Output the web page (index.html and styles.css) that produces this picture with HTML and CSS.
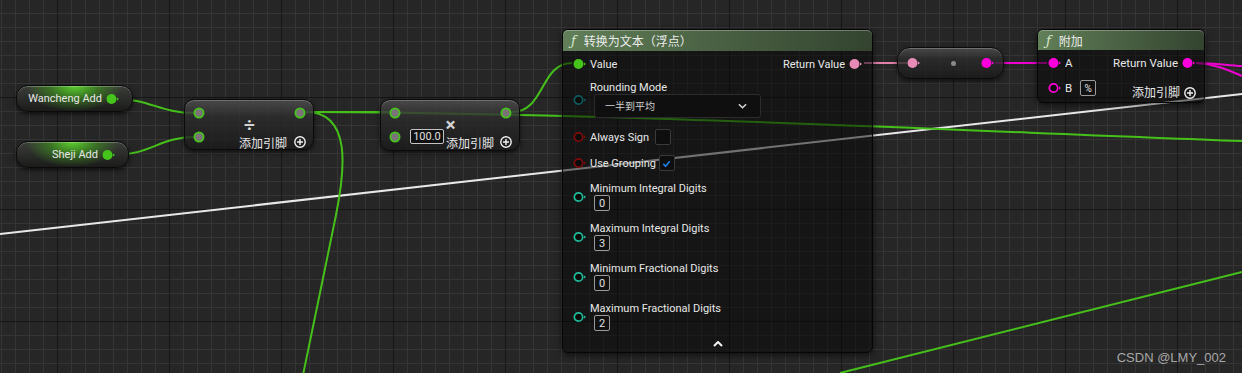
FILE: index.html
```html
<!DOCTYPE html>
<html lang="zh-CN">
<head>
  <meta charset="UTF-8">
  <meta name="viewport" content="width=device-width, initial-scale=1.0">
  <title>蓝图 - 百分比文本</title>
  <link rel="stylesheet" href="styles.css">
</head>
<body>
  <div class="graph">
    <svg class="wires" width="1242" height="373" viewBox="0 0 1242 373">
      <path class="w-white" d="M0 234 L1242 94"/>
      <path class="w-green" d="M117 99 C150 99 160 113 194 113"/>
      <path class="w-green" d="M114 155 C150 155 160 137 194 137"/>
      <path class="w-green" d="M306 112 L390 112"/>
      <path class="w-green" d="M306 112 C600 113 900 128 1242 141"/>
      <path class="w-green" d="M306 112 C352 112 345 170 336 215 S310 340 303 375"/>
      <path class="w-green" d="M512 112 C545 112 540 63 572 63"/>
      <path class="w-green" d="M840 373 L1242 272"/>
      <path class="w-pink" d="M864 63 L907 63"/>
      <path class="w-magenta" d="M995 63 L1047 63"/>
      <path class="w-magenta" d="M1196 63 C1215 63 1225 65 1242 66"/>
      <path class="w-magenta" d="M1196 63 C1215 64 1228 70 1242 76"/>
    </svg>

    <div class="node var var-wancheng">
      <span class="var-name">Wancheng Add</span>
      <svg class="pin c-green" viewBox="0 0 14 12"><circle cx="5.5" cy="6" r="5"/><path d="M11 4.5 13 6 11 7.5z"/></svg>
    </div>

    <div class="node var var-sheji">
      <span class="var-name">Sheji Add</span>
      <svg class="pin c-green" viewBox="0 0 14 12"><circle cx="5.5" cy="6" r="5"/><path d="M11 4.5 13 6 11 7.5z"/></svg>
    </div>

    <div class="node pure pure-divide">
      <svg class="wpin in-a" viewBox="0 0 12 12"><circle cx="6" cy="6" r="4.6"/></svg>
      <svg class="wpin in-b" viewBox="0 0 12 12"><circle cx="6" cy="6" r="4.6"/></svg>
      <span class="op">÷</span>
      <svg class="wpin out" viewBox="0 0 12 12"><circle cx="6" cy="6" r="4.6"/></svg>
      <div class="add-pin">
        <span>添加引脚</span>
        <svg class="plus" viewBox="0 0 12 12"><circle cx="6" cy="6" r="5.2"/><path d="M6 3v6M3 6h6"/></svg>
      </div>
    </div>

    <div class="node pure pure-multiply">
      <svg class="wpin in-a" viewBox="0 0 12 12"><circle cx="6" cy="6" r="4.6"/></svg>
      <svg class="wpin in-b" viewBox="0 0 12 12"><circle cx="6" cy="6" r="4.6"/></svg>
      <span class="op">×</span>
      <svg class="wpin out" viewBox="0 0 12 12"><circle cx="6" cy="6" r="4.6"/></svg>
      <div class="add-pin wide">
        <span class="num-box wide-box">100.0</span>
        <span class="add-label">添加引脚</span>
        <svg class="plus" viewBox="0 0 12 12"><circle cx="6" cy="6" r="5.2"/><path d="M6 3v6M3 6h6"/></svg>
      </div>
    </div>

    <div class="node fn fn-convert">
      <div class="fn-head"><span class="fx">ƒ</span>转换为文本（浮点）</div>
      <div class="fn-body">
        <div class="fn-inputs">
          <div class="pin-row">
            <svg class="pin c-green" viewBox="0 0 14 12"><circle cx="5.5" cy="6" r="5"/><path d="M11 4.5 13 6 11 7.5z"/></svg>
            <span>Value</span>
          </div>
          <div class="pin-row mt8">
            <svg class="pin hollow c-enum" viewBox="0 0 14 12"><circle cx="5.5" cy="6" r="4.2"/><path d="M11 4.5 13 6 11 7.5z"/></svg>
            <div class="stack">
              <span>Rounding Mode</span>
              <div class="dropdown">
                <span>一半到平均</span>
                <svg class="chev" viewBox="0 0 10 6"><path d="M1 1 5 5 9 1"/></svg>
              </div>
            </div>
          </div>
          <div class="pin-row mt10">
            <svg class="pin hollow c-red" viewBox="0 0 14 12"><circle cx="5.5" cy="6" r="4.2"/><path d="M11 4.5 13 6 11 7.5z"/></svg>
            <span>Always Sign</span>
            <span class="check"></span>
          </div>
          <div class="pin-row mt8">
            <svg class="pin hollow c-red" viewBox="0 0 14 12"><circle cx="5.5" cy="6" r="4.2"/><path d="M11 4.5 13 6 11 7.5z"/></svg>
            <span>Use Grouping</span>
            <span class="check tight"><svg viewBox="0 0 12 12"><path d="M2.5 6.5 5 9 9.5 3.5"/></svg></span>
          </div>
          <div class="pin-row mt10">
            <svg class="pin hollow c-teal" viewBox="0 0 14 12"><circle cx="5.5" cy="6" r="4.2"/><path d="M11 4.5 13 6 11 7.5z"/></svg>
            <div class="stack">
              <span>Minimum Integral Digits</span>
              <span class="num-box">0</span>
            </div>
          </div>
          <div class="pin-row mt11">
            <svg class="pin hollow c-teal" viewBox="0 0 14 12"><circle cx="5.5" cy="6" r="4.2"/><path d="M11 4.5 13 6 11 7.5z"/></svg>
            <div class="stack">
              <span>Maximum Integral Digits</span>
              <span class="num-box">3</span>
            </div>
          </div>
          <div class="pin-row mt11">
            <svg class="pin hollow c-teal" viewBox="0 0 14 12"><circle cx="5.5" cy="6" r="4.2"/><path d="M11 4.5 13 6 11 7.5z"/></svg>
            <div class="stack">
              <span>Minimum Fractional Digits</span>
              <span class="num-box">0</span>
            </div>
          </div>
          <div class="pin-row mt11">
            <svg class="pin hollow c-teal" viewBox="0 0 14 12"><circle cx="5.5" cy="6" r="4.2"/><path d="M11 4.5 13 6 11 7.5z"/></svg>
            <div class="stack">
              <span>Maximum Fractional Digits</span>
              <span class="num-box">2</span>
            </div>
          </div>
        </div>
        <div class="fn-outputs">
          <div class="pin-row">
            <span>Return Value</span>
            <svg class="pin c-pink" viewBox="0 0 14 12"><circle cx="5.5" cy="6" r="5"/><path d="M11 4.5 13 6 11 7.5z"/></svg>
          </div>
        </div>
      </div>
      <div class="fn-foot">
        <svg class="collapse" viewBox="0 0 10 6"><path d="M1 5 5 1 9 5"/></svg>
      </div>
    </div>

    <div class="node pure reroute">
      <svg class="pin c-pink" viewBox="0 0 14 12"><circle cx="5.5" cy="6" r="5"/><path d="M11 4.5 13 6 11 7.5z"/></svg>
      <span class="dot"></span>
      <svg class="pin c-magenta" viewBox="0 0 14 12"><circle cx="5.5" cy="6" r="5"/><path d="M11 4.5 13 6 11 7.5z"/></svg>
    </div>

    <div class="node fn fn-append">
      <div class="fn-head"><span class="fx">ƒ</span>附加</div>
      <div class="fn-body">
        <div class="fn-inputs">
          <div class="pin-row">
            <svg class="pin c-magenta" viewBox="0 0 14 12"><circle cx="5.5" cy="6" r="5"/><path d="M11 4.5 13 6 11 7.5z"/></svg>
            <span>A</span>
          </div>
          <div class="pin-row mt7">
            <svg class="pin hollow c-magenta" viewBox="0 0 14 12"><circle cx="5.5" cy="6" r="4.2"/><path d="M11 4.5 13 6 11 7.5z"/></svg>
            <span>B</span>
            <span class="num-box pct">%</span>
          </div>
        </div>
        <div class="fn-outputs">
          <div class="pin-row">
            <span>Return Value</span>
            <svg class="pin c-magenta" viewBox="0 0 14 12"><circle cx="5.5" cy="6" r="5"/><path d="M11 4.5 13 6 11 7.5z"/></svg>
          </div>
          <div class="pin-row add-row">
            <span class="add-label">添加引脚</span>
            <svg class="plus" viewBox="0 0 12 12"><circle cx="6" cy="6" r="5.2"/><path d="M6 3v6M3 6h6"/></svg>
          </div>
        </div>
      </div>
    </div>

    <div class="watermark">CSDN @LMY_002</div>
  </div>
</body>
</html>
```

FILE: styles.css
```css
* {
  box-sizing: border-box;
}

body {
  margin: 0;
  width: 1242px;
  height: 373px;
  overflow: hidden;
  font-family: Roboto, "Noto Sans CJK SC", sans-serif;
  color: #e8e8e8;
  background-color: #262626;
  background-image:
    linear-gradient(90deg, #161616 1px, transparent 1px),
    linear-gradient(180deg, #161616 1px, transparent 1px),
    linear-gradient(90deg, #353535 1px, transparent 1px),
    linear-gradient(180deg, #353535 1px, transparent 1px);
  background-size: 112px 112px, 112px 112px, 14px 14px, 14px 14px;
  background-position: 57px 0, 0 97px, 1px 0, 0 13px;
}

.graph {
  position: relative;
  width: 1242px;
  height: 373px;
}

/* wires */
.wires {
  position: absolute;
  left: 0;
  top: 0;
}

.wires path {
  fill: none;
  stroke-width: 2;
}

.w-white { stroke: #e8e8e8; stroke-width: 2.5; }
.w-green { stroke: #45c01a; }
.w-pink { stroke: #e07fa9; }
.w-magenta { stroke: #f000d0; }

/* nodes */
.node {
  position: absolute;
}

.pin {
  width: 14px;
  height: 12px;
  flex: none;
}

.pin circle,
.pin path {
  fill: currentColor;
}

.pin.hollow circle {
  fill: #0b0b0b;
  stroke: currentColor;
  stroke-width: 1.7;
}

.c-green { color: #45c41c; }
.c-pink { color: #e78bb6; }
.c-magenta { color: #ff00dc; }
.c-teal { color: #1fbc9c; }
.c-red { color: #7e0c0c; }
.c-enum { color: #0f5a5c; }

.plus {
  width: 12px;
  height: 12px;
  flex: none;
}

.plus circle,
.plus path {
  fill: none;
  stroke: #f2f2f2;
  stroke-width: 1.4;
}

.num-box {
  display: inline-flex;
  align-items: center;
  justify-content: center;
  width: 16px;
  height: 16px;
  border: 1px solid #9a9a9a;
  border-radius: 2px;
  background: #111;
  font-size: 11px;
  color: #e0e0e0;
}

/* variable getters */
.var {
  display: flex;
  align-items: center;
  justify-content: flex-end;
  gap: 4px;
  height: 27px;
  padding-right: 12px;
  border: 1px solid #0a0a0a;
  border-radius: 12px;
  background:
    radial-gradient(ellipse 42% 100% at 50% 0%, rgba(90, 205, 45, 1), rgba(60, 145, 28, 0.65) 50%, rgba(40, 90, 20, 0) 100%),
    linear-gradient(#3b3d39, #1b1c1a);
  box-shadow: inset 0 1px 0 rgba(255, 255, 255, 0.25), 0 2px 4px rgba(0, 0, 0, 0.6);
  font-size: 11px;
}

.var-wancheng {
  left: 16px;
  top: 85px;
  width: 117px;
}

.var-sheji {
  left: 16px;
  top: 141px;
  width: 113px;
}

/* pure nodes */
.pure {
  border: 1px solid #0a0a0a;
  border-radius: 10px;
  background: linear-gradient(rgba(78, 78, 78, 0.85), rgba(44, 44, 44, 0.8) 35%, rgba(24, 24, 24, 0.75));
  box-shadow: inset 0 1px 0 rgba(255, 255, 255, 0.22), 0 2px 5px rgba(0, 0, 0, 0.6);
  display: grid;
  grid-template-columns: 12px 1fr 12px;
  grid-template-rows: 24px 24px;
  padding: 1px 7px 0 8px;
}

.wpin {
  width: 12px;
  height: 12px;
  align-self: center;
}

.wpin circle {
  fill: #7b7377;
  stroke: #45c41c;
  stroke-width: 1.8;
}

.in-a { grid-area: 1 / 1; }
.in-b { grid-area: 2 / 1; }
.out { grid-area: 1 / 3; }

.op {
  grid-area: 1 / 2 / 3 / 3;
  align-self: center;
  justify-self: center;
  font-size: 19px;
  font-weight: 700;
  line-height: 1;
  color: #d4d4d4;
  margin-bottom: 1px;
}

.add-pin {
  grid-area: 2 / 2 / 3 / 4;
  justify-self: end;
  align-self: end;
  display: flex;
  align-items: center;
  gap: 7px;
  height: 16px;
  margin-bottom: -1px;
  font-size: 12px;
}

.pure-divide {
  left: 184px;
  top: 99px;
  width: 130px;
  height: 51px;
}

.pure-multiply {
  left: 380px;
  top: 99px;
  width: 140px;
  height: 52px;
}

.add-pin.wide {
  justify-self: stretch;
  margin-left: 9px;
  gap: 0;
}

.wide-box {
  width: 34px;
  height: 15px;
  margin-top: -11px;
  border-color: #c4c4c4;
  font-size: 11px;
}

.add-pin.wide .add-label {
  margin-left: 2px;
  margin-right: 6px;
}

.reroute {
  left: 897px;
  top: 47px;
  width: 107px;
  height: 32px;
  border-radius: 13px;
  display: flex;
  align-items: center;
  justify-content: space-between;
  padding: 0 8px 0 9px;
}

.dot {
  width: 5px;
  height: 5px;
  border-radius: 50%;
  background: #8a8a8a;
  margin-left: 4px;
}

/* function nodes */
.fn {
  display: flex;
  flex-direction: column;
  border: 1px solid #060606;
  border-radius: 6px;
  background: rgba(3, 6, 3, 0.52);
  box-shadow: 0 2px 6px rgba(0, 0, 0, 0.6);
  font-size: 11px;
}

.fn-head {
  height: 21px;
  display: flex;
  align-items: center;
  padding-left: 8px;
  border-radius: 5px 5px 0 0;
  background: linear-gradient(90deg, #617f58, #4c6445 45%, #33432f);
  box-shadow: inset 0 1px 0 rgba(255, 255, 255, 0.3);
  font-size: 12px;
  color: #ececec;
}

.fx {
  font-family: "DejaVu Serif", serif;
  font-style: italic;
  font-size: 13px;
  color: #d6ead0;
  margin-right: 8px;
}

.fn-body {
  display: flex;
  justify-content: space-between;
  padding: 4px 8px 0 10px;
}

.fn-inputs,
.fn-outputs {
  display: flex;
  flex-direction: column;
}

.fn-outputs {
  align-items: flex-end;
}

.pin-row {
  display: flex;
  align-items: center;
  gap: 3px;
  min-height: 18px;
  line-height: 13px;
}

.fn-outputs .pin-row {
  gap: 4px;
}

.mt7 { margin-top: 7px; }
.mt8 { margin-top: 8px; }
.mt10 { margin-top: 10px; }
.mt11 { margin-top: 11px; }

.stack {
  display: flex;
  flex-direction: column;
  align-items: flex-start;
}

.stack .num-box,
.stack .dropdown {
  margin-left: 4px;
}

.dropdown {
  width: 167px;
  height: 24px;
  display: flex;
  align-items: center;
  justify-content: space-between;
  padding: 0 13px 0 10px;
  border: 1px solid #2c2c2c;
  border-radius: 3px;
  background: #0f0f0f;
  font-size: 10px;
  color: #cfcfcf;
}

.chev {
  width: 9px;
  height: 6px;
}

.chev path,
.collapse path {
  fill: none;
  stroke: #d8d8d8;
  stroke-width: 1.6;
}

.check {
  width: 16px;
  height: 16px;
  margin-left: 3px;
  border: 1px solid #3a3a3a;
  border-radius: 2px;
  background: #0e0e0e;
  display: flex;
  align-items: center;
  justify-content: center;
}

.check.tight {
  margin-left: 0;
}

.check svg {
  width: 11px;
  height: 11px;
}

.check path {
  fill: none;
  stroke: #1f7fe6;
  stroke-width: 1.8;
}

.fn-foot {
  margin-top: auto;
  display: flex;
  justify-content: center;
  padding-bottom: 5px;
}

.collapse {
  width: 10px;
  height: 6px;
}

.collapse path {
  stroke: #f4f4f4;
  stroke-width: 2;
}

.fn-convert {
  left: 562px;
  top: 29px;
  width: 311px;
  height: 324px;
}

.fn-convert .fn-outputs {
  padding-right: 1px;
}

.fn-append {
  left: 1037px;
  top: 29px;
  width: 168px;
  height: 74px;
}

.fn-append .fn-body {
  padding-right: 8px;
}

.fn-append .pin-row > span:not(.num-box):not(.add-label) {
  font-size: 11.5px;
}

.pct {
  margin-left: 5px;
  font-size: 10px;
}

.add-row {
  margin-top: 12px;
  gap: 7px;
}

.add-label {
  font-size: 12px;
}

.watermark {
  position: absolute;
  right: 16px;
  bottom: 8px;
  font-family: "Liberation Sans", Arial, sans-serif;
  font-size: 13px;
  color: #a8a8a8;
}
```
